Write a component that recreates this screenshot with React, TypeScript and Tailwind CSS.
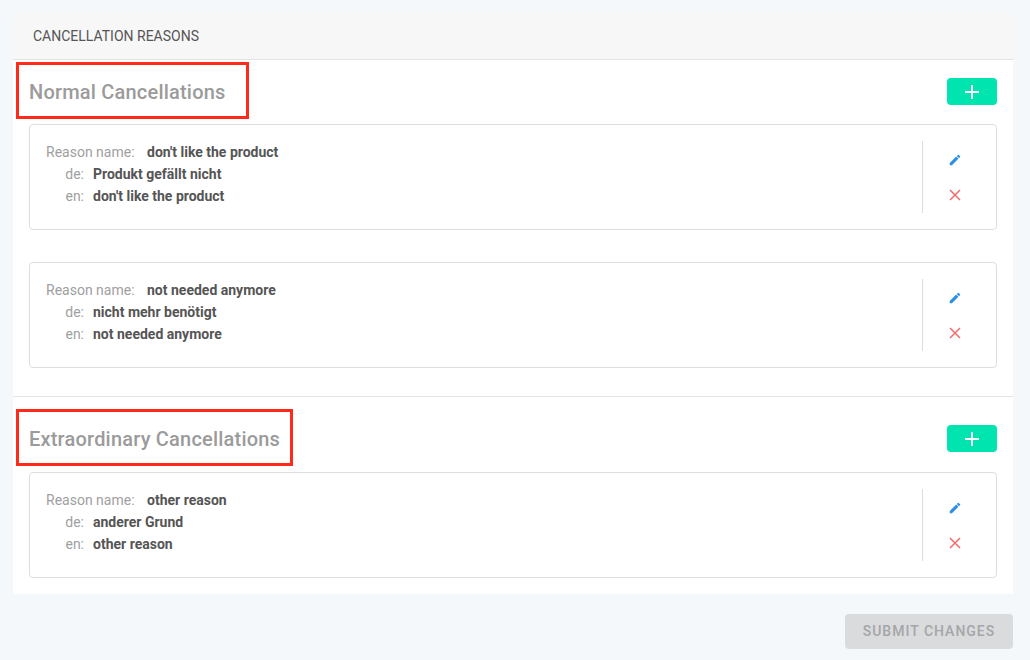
import React from "react";

const Pencil = () => (
  <svg width="14" height="14" viewBox="0 0 24 24" fill="#2a8fe6"><path d="M3 17.25V21h3.75L17.81 9.94l-3.75-3.75L3 17.25zM20.71 7.04a1 1 0 000-1.41l-2.34-2.34a1 1 0 00-1.41 0l-1.83 1.83 3.75 3.75 1.83-1.83z"/></svg>
);
const Cross = () => (
  <svg width="12" height="12" viewBox="0 0 12 12" stroke="#f26b6b" strokeWidth="1.5"><path d="M1 1L11 11M11 1L1 11"/></svg>
);

function Reason({ name, de, en }: { name: string; de: string; en: string }) {
  return (
    <div className="flex border border-[#dedede] rounded-[4px] h-[106px] mx-[16px]">
      <div className="flex-1 pl-4 pt-[16px] text-[14px] leading-[22px]">
        <div className="flex"><span className="text-[#a0a0a0] w-[101px]">Reason name:</span><b className="text-[#555] font-bold">{name}</b></div>
        <div className="flex"><span className="text-[#a0a0a0] w-[38px] text-right mr-[9px]">de:</span><b className="text-[#555] font-bold">{de}</b></div>
        <div className="flex"><span className="text-[#a0a0a0] w-[38px] text-right mr-[9px]">en:</span><b className="text-[#555] font-bold">{en}</b></div>
      </div>
      <div className="my-4 border-l border-[#dedede] w-[74px] flex flex-col items-center justify-center gap-[22px] pr-[10px]">
        <Pencil /><Cross />
      </div>
    </div>
  );
}

function Title({ text, w }: { text: string; w: string }) {
  return (
    <div className="flex items-start justify-between pr-[16px]">
      <div className={`border-[3px] border-[#ff2a1a] h-[57px] ml-[3px] flex items-center pl-[10px] pt-[3px] ${w}`}>
        <span className="text-[20px] font-medium text-[#9b9b9b] tracking-[0.2px]">{text}</span>
      </div>
      <button className="mt-[16px] w-[50px] h-[27px] rounded-[4px] bg-[#00e5b0] flex items-center justify-center">
        <svg width="16" height="16" viewBox="0 0 16 16" stroke="white" strokeWidth="2"><path d="M8 1V15M1 8H15"/></svg>
      </button>
    </div>
  );
}

export default function App() {
  return (
    <div className="w-[1030px] h-[660px] bg-[#f5f8fb] p-[13px] pb-0 pr-[17px]" style={{ fontFamily: "Roboto, 'Liberation Sans', sans-serif" }}>
      <div className="bg-white rounded-t-[6px]">
        <div className="bg-[#f7f7f7] h-[47px] border-b border-[#e4e4e4] flex items-center pl-5 text-[14px] text-[#555] rounded-t-[6px]">CANCELLATION REASONS</div>
        <div className="pt-[2px]">
          <Title text="Normal Cancellations" w="w-[233px]" />
          <div className="mt-[5px]"><Reason name="don't like the product" de="Produkt gefällt nicht" en="don't like the product" /></div>
          <div className="mt-[32px]"><Reason name="not needed anymore" de="nicht mehr benötigt" en="not needed anymore" /></div>
          <div className="border-b border-[#e4e4e4] mt-[28px]" />
          <div className="mt-[12px]"><Title text="Extraordinary Cancellations" w="w-[277px]" /></div>
          <div className="mt-[6px] pb-[16px]"><Reason name="other reason" de="anderer Grund" en="other reason" /></div>
        </div>
      </div>
      <div className="flex justify-end mt-[20px]">
        <button className="w-[168px] h-[35px] rounded-[4px] bg-[#dadbdd] text-[#a5a6a8] text-[14px] font-medium tracking-[1px]">SUBMIT CHANGES</button>
      </div>
    </div>
  );
}
